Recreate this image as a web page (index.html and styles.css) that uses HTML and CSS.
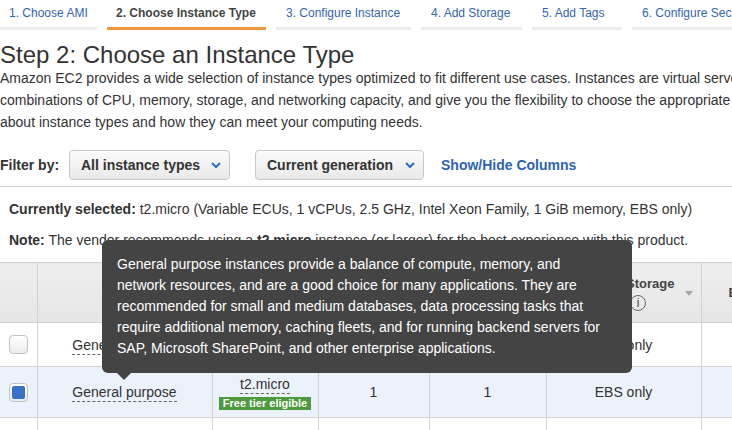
FILE: index.html
```html
<!DOCTYPE html>
<html>
<head>
<meta charset="utf-8">
<link rel="stylesheet" href="styles.css">
</head>
<body>
<div class="page">
  <nav class="tabs">
    <a class="tab t1">1. Choose AMI</a>
    <a class="tab t2 active">2. Choose Instance Type</a>
    <a class="tab t3">3. Configure Instance</a>
    <a class="tab t4">4. Add Storage</a>
    <a class="tab t5">5. Add Tags</a>
    <a class="tab t6">6. Configure Security Group</a>
  </nav>

  <main class="content">
    <h1 class="title">Step 2: Choose an Instance Type</h1>
    <p class="intro">Amazon EC2 provides a wide selection of instance types optimized to fit different use cases. Instances are virtual servers that can run applications. They have varying<br>combinations of CPU, memory, storage, and networking capacity, and give you the flexibility to choose the appropriate mix of resources for your applications. <a class="link-plain">Learn more</a><br>about instance types and how they can meet your computing needs.</p>

    <div class="filter">
      <span class="filter-label">Filter by:</span>
      <div class="select select-types">
        <span>All instance types</span>
        <svg class="chev" width="10" height="6" viewBox="0 0 10 6"><polyline points="1,1 5,5 9,1" fill="none" stroke="#2d6bc4" stroke-width="2"/></svg>
      </div>
      <div class="select select-gen">
        <span>Current generation</span>
        <svg class="chev" width="10" height="6" viewBox="0 0 10 6"><polyline points="1,1 5,5 9,1" fill="none" stroke="#2d6bc4" stroke-width="2"/></svg>
      </div>
      <a class="link">Show/Hide Columns</a>
    </div>

    <div class="info-line sel"><b>Currently selected:</b> t2.micro (Variable ECUs, 1 vCPUs, 2.5 GHz, Intel Xeon Family, 1 GiB memory, EBS only)</div>
    <div class="info-line note"><b>Note:</b> The vendor recommends using a <b>t2.micro</b> instance (or larger) for the best experience with this product.</div>

    <div class="table-wrap">
      <table class="grid">
        <colgroup>
          <col class="c-check"><col class="c-family"><col class="c-type"><col class="c-cpu"><col class="c-mem"><col class="c-store"><col class="c-ebs">
        </colgroup>
        <thead>
          <tr>
            <th></th>
            <th class="center">Family</th>
            <th class="center">Type</th>
            <th class="center">vCPUs</th>
            <th class="center">Memory (GiB)</th>
            <th>
              <div class="th-inner">
                <span class="th-label">Instance Storage<br><span class="gb">(GB)</span> <span class="info-i">i</span></span>
                <span class="sort"></span>
              </div>
            </th>
            <th class="left-pad">EBS-Optimized Available</th>
          </tr>
        </thead>
        <tbody>
          <tr class="row1">
            <td class="center"><span class="cb"></span></td>
            <td class="center"><span class="dash">General purpose</span></td>
            <td class="center"><span class="dash">t2.nano</span></td>
            <td class="center">1</td>
            <td class="center">0.5</td>
            <td class="center">EBS only</td>
            <td class="center">-</td>
          </tr>
          <tr class="row2">
            <td class="center"><span class="cb checked"><span class="cb-fill"></span></span></td>
            <td class="center"><span class="dash">General purpose</span></td>
            <td class="center">
              <div class="type-cell">
                <span class="dash">t2.micro</span>
                <span class="badge">Free tier eligible</span>
              </div>
            </td>
            <td class="center">1</td>
            <td class="center">1</td>
            <td class="center">EBS only</td>
            <td class="center">-</td>
          </tr>
          <tr class="row3">
            <td class="center"><span class="cb"></span></td>
            <td class="center"><span class="dash">General purpose</span></td>
            <td class="center"><span class="dash">t2.small</span></td>
            <td class="center">1</td>
            <td class="center">2</td>
            <td class="center">EBS only</td>
            <td class="center">-</td>
          </tr>
        </tbody>
      </table>
    </div>
  </main>

  <div class="tooltip">General purpose instances provide a balance of compute, memory, and<br>network resources, and are a good choice for many applications. They are<br>recommended for small and medium databases, data processing tasks that<br>require additional memory, caching fleets, and for running backend servers for<br>SAP, Microsoft SharePoint, and other enterprise applications.</div>
</div>
</body>
</html>
```

FILE: styles.css
```css
* { box-sizing: border-box; }

html, body {
  margin: 0;
  padding: 0;
  background: #fff;
}

body {
  font-family: "Liberation Sans", Arial, Helvetica, sans-serif;
  color: #333;
  width: 732px;
  height: 430px;
  overflow: hidden;
}

.page {
  position: relative;
  width: 732px;
  height: 430px;
  overflow: hidden;
}

/* Tabs */
.tabs {
  display: flex;
  gap: 10px;
  white-space: nowrap;
}

.tab {
  display: block;
  flex: 0 0 auto;
  height: 30px;
  line-height: 27px;
  padding: 0 0 0 9px;
  font-size: 12px;
  color: #3465b0;
  border-bottom: 3px solid #ececec;
}

.t1 { width: 97px; }
.t2 { width: 159px; }
.t3 { width: 135px; padding-left: 10px; }
.t4 { width: 101px; padding-left: 10px; }
.t5 { width: 90px; padding-left: 10px; }
.t6 { width: 200px; padding-left: 10px; }

.tab.active {
  color: #444;
  font-weight: bold;
  border-bottom-color: #ec9a3a;
}

/* Content */
.content {
  padding: 0;
}

.title {
  margin: 13px 0 0 0;
  font-size: 24px;
  line-height: 24px;
  font-weight: normal;
  color: #333;
  white-space: nowrap;
}

.intro {
  margin: 0;
  font-size: 14px;
  line-height: 22px;
  color: #333;
  white-space: nowrap;
}

.link-plain { color: #2c64b3; }

.filter {
  display: flex;
  align-items: center;
  margin-top: 17px;
  padding-bottom: 6px;
  border-bottom: 1px solid #cfcfcf;
  white-space: nowrap;
}

.filter-label {
  font-size: 14px;
  font-weight: bold;
  color: #333;
  width: 69px;
}

.select {
  display: flex;
  align-items: center;
  justify-content: space-between;
  height: 30px;
  padding: 0 8px 0 11px;
  border: 1px solid #c8c8c8;
  border-radius: 4px;
  background: linear-gradient(#fbfbfb, #e9e9e9);
  font-size: 14px;
  font-weight: bold;
  color: #333;
}

.select-types { width: 161px; margin-right: 25px; }
.select-gen { width: 169px; margin-right: 17px; }

.chev { display: block; }

.link {
  font-size: 14px;
  font-weight: bold;
  color: #2c64b3;
}

.info-line {
  padding-left: 9px;
  font-size: 14px;
  line-height: 20px;
  color: #333;
  white-space: nowrap;
}

.sel { margin-top: 12px; }
.note { margin-top: 11px; }

/* Table */
.table-wrap {
  margin-top: 12px;
  width: 732px;
  overflow: hidden;
}

.grid {
  border-collapse: collapse;
  table-layout: fixed;
  width: 860px;
  font-size: 14px;
  color: #333;
}

.c-check { width: 37px; }
.c-family { width: 175px; }
.c-type { width: 106px; }
.c-cpu { width: 111px; }
.c-mem { width: 117px; }
.c-store { width: 155px; }
.c-ebs { width: 159px; }

.grid th {
  height: 60px;
  background: linear-gradient(#eeeeee, #e6e6e6);
  border: 1px solid #d2d2d2;
  border-left: none;
  font-size: 13px;
  font-weight: bold;
  color: #444;
  padding: 0;
  vertical-align: middle;
  white-space: nowrap;
}

.grid td {
  border: 1px solid #d2d2d2;
  border-left: none;
  padding: 0;
  vertical-align: middle;
  white-space: nowrap;
}

.center { text-align: center; }
.left-pad { text-align: left; padding-left: 27px !important; }

.th-inner {
  display: flex;
  align-items: center;
  justify-content: flex-end;
  padding-right: 8px;
  gap: 10px;
}

.th-label {
  text-align: center;
  line-height: 19px;
}

.info-i {
  display: inline-block;
  width: 16px;
  height: 16px;
  border: 1px solid #666;
  border-radius: 50%;
  font-size: 12px;
  line-height: 14px;
  font-weight: normal;
  text-align: center;
  color: #444;
  vertical-align: middle;
}

.sort {
  width: 0;
  height: 0;
  border-left: 4px solid transparent;
  border-right: 4px solid transparent;
  border-top: 5px solid #a6a6a6;
  margin-top: 2px;
}

.row1 td { height: 44px; }
.row2 td { height: 51px; background: #ebf2fc; }
.row3 td { height: 44px; }

.cb {
  display: inline-block;
  width: 19px;
  height: 19px;
  border: 1px solid #c2c2c2;
  border-radius: 4px;
  background: linear-gradient(#ffffff, #ececec);
  vertical-align: middle;
}

.cb.checked {
  padding: 2px;
}

.cb-fill {
  display: block;
  width: 13px;
  height: 13px;
  border-radius: 2px;
  background: #3a72c9;
}

.dash {
  border-bottom: 1px dashed #666;
  padding-bottom: 1px;
}

.type-cell {
  display: flex;
  flex-direction: column;
  align-items: center;
  gap: 3px;
  padding-top: 2px;
}

.badge {
  display: block;
  background: #4e9a3e;
  color: #fff;
  font-size: 11px;
  font-weight: bold;
  line-height: 13px;
  height: 13px;
  padding: 0 4px;
}

/* Tooltip overlay */
.tooltip {
  position: absolute;
  left: 102px;
  top: 240px;
  width: 530px;
  height: 133px;
  padding: 14px 0 0 15px;
  background: #444;
  border-radius: 6px;
  color: #fff;
  font-size: 14px;
  line-height: 21px;
  white-space: nowrap;
}

.tooltip::after {
  content: "";
  position: absolute;
  left: 15px;
  top: 133px;
  width: 0;
  height: 0;
  border-left: 7px solid transparent;
  border-right: 7px solid transparent;
  border-top: 7px solid #444;
}
```
